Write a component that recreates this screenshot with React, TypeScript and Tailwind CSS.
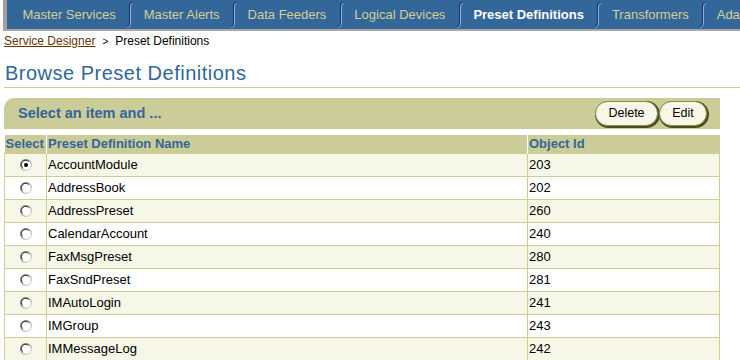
import React from "react";

const tabs = [
  "Master Services",
  "Master Alerts",
  "Data Feeders",
  "Logical Devices",
  "Preset Definitions",
  "Transformers",
  "Adapters",
];

const rows = [
  { name: "AccountModule", id: "203" },
  { name: "AddressBook", id: "202" },
  { name: "AddressPreset", id: "260" },
  { name: "CalendarAccount", id: "240" },
  { name: "FaxMsgPreset", id: "280" },
  { name: "FaxSndPreset", id: "281" },
  { name: "IMAutoLogin", id: "241" },
  { name: "IMGroup", id: "243" },
  { name: "IMMessageLog", id: "242" },
];

const TabSep = () => (
  <svg width="7" height="29" viewBox="0 0 7 29" className="shrink-0">
    <path d="M6.5,2.5 Q3.5,2.5 3.5,6 L3.5,23 Q3.5,26.5 0.5,26.5" fill="none" stroke="#1c3c66" strokeWidth="1.2" />
    <path d="M7,3.5 Q4.5,3.5 4.5,7 L4.5,23 Q4.5,27.5 1,27.5" fill="none" stroke="#8fb0d8" strokeWidth="1" />
  </svg>
);

const Radio = ({ checked }: { checked?: boolean }) => (
  <svg width="12" height="12" viewBox="0 0 12 12" className="mx-auto block">
    <defs>
      <linearGradient id="rg" x1="0" y1="0" x2="1" y2="1">
        <stop offset="0" stopColor="#6f6f6f" />
        <stop offset="0.5" stopColor="#9a9a9a" />
        <stop offset="1" stopColor="#f0f0f0" />
      </linearGradient>
    </defs>
    <circle cx="6" cy="6" r="5.4" fill="white" stroke="url(#rg)" strokeWidth="1.2" />
    <path d="M2.6,8.6 A4,4 0 0 1 8.6,2.6" fill="none" stroke="#303030" strokeWidth="1" />
    {checked && <circle cx="6" cy="6" r="2" fill="#000" />}
  </svg>
);

const Btn = ({ label, w }: { label: string; w: string }) => (
  <button
    className={`${w} h-[25px] rounded-full bg-[#f7f7e7] border border-[#8a8a5c] shadow-[1px_1px_0_1px_#4d4d1a] text-[12.5px] text-black leading-none`}
  >
    {label}
  </button>
);

export default function App() {
  return (
    <div className="w-[740px] h-[360px] overflow-hidden bg-white font-['Liberation_Sans',Arial,sans-serif]">
      <div className="flex h-[31px] ml-[3px] border-l-[4px] border-l-[#a0a0a0] border-b-2 border-b-[#a8a8a8] bg-[#336699] overflow-hidden items-center pl-[5px]">
        {tabs.map((t, i) => (
          <React.Fragment key={t}>
            {i > 0 && <TabSep />}
            <span
              className={`px-[10.5px] text-[13px] whitespace-nowrap ${
                t === "Preset Definitions" ? "font-bold text-white" : "text-[#d3cf98]"
              }`}
            >
              {t}
            </span>
          </React.Fragment>
        ))}
      </div>

      <div className="px-[4px] pt-[3px] text-[12px] leading-[14px] text-black">
        <span className="underline text-[#663300]">Service Designer</span>
        <span className="mx-[7px] text-[10px]">&gt;</span>
        Preset Definitions
      </div>

      <div className="ml-[4px] mt-[13px] pl-[1px] pb-[3px] border-b border-[#cccc99] text-[20px] leading-[22px] tracking-[0.5px] text-[#336699]">
        Browse Preset Definitions
      </div>

      <div className="mt-[10px] ml-[4px] w-[716px] h-[31px] bg-[#cccc99] rounded-tl-[10px] flex items-center justify-between pl-[14px] pr-[13px]">
        <span className="text-[14.5px] font-bold text-[#336699]">Select an item and ...</span>
        <div className="flex gap-[1px]">
          <Btn label="Delete" w="w-[63px]" />
          <Btn label="Edit" w="w-[48px]" />
        </div>
      </div>

      <table className="mt-[6px] ml-[4px] w-[716px] border-collapse text-[13px] table-fixed">
        <colgroup>
          <col className="w-[42px]" />
          <col className="w-[481px]" />
          <col />
        </colgroup>
        <thead>
          <tr className="bg-[#cccc99] h-[18px] text-[#336699] font-bold text-left">
            <th className="pl-[1px] border-r border-white leading-[16px]">Select</th>
            <th className="pl-[1px] border-r border-white leading-[16px]">Preset Definition Name</th>
            <th className="pl-[1px] leading-[16px]">Object Id</th>
          </tr>
        </thead>
        <tbody>
          {rows.map((r, i) => (
            <tr key={r.name} className={`h-[23px] ${i % 2 === 0 ? "bg-[#f7f7e7]" : "bg-white"}`}>
              <td className="border border-[#cccc99] p-0">
                <Radio checked={i === 0} />
              </td>
              <td className="border border-[#cccc99] pl-[1px] text-black">{r.name}</td>
              <td className="border border-[#cccc99] pl-[1px] text-black">{r.id}</td>
            </tr>
          ))}
        </tbody>
      </table>
    </div>
  );
}
